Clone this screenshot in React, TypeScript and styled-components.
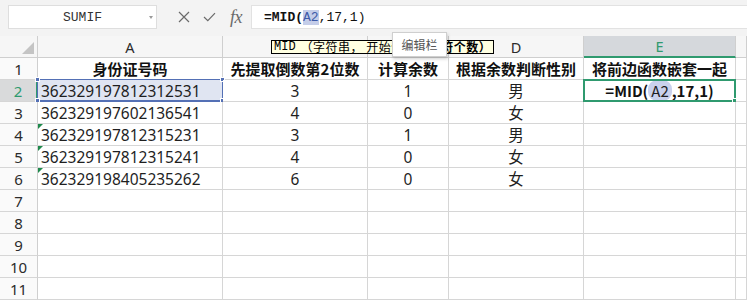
import React from "react";
import styled, { createGlobalStyle, css } from "styled-components";

const GREEN = "#2f9a6f";
const BLUE = "#5470b5";
const GRID = "#d6d6d6";

const GlobalStyle = createGlobalStyle`
  html, body { margin: 0; padding: 0; background: #ffffff; }
  body { font-family: "Noto Sans", "Noto Sans CJK SC", sans-serif; color: #1f1f1f; overflow: hidden; }
  * { box-sizing: border-box; }
`;

const Page = styled.div`
  position: relative;
  width: 747px;
  height: 304px;
  overflow: hidden;
  background: #ffffff;
`;

const Toolbar = styled.div`
  display: flex;
  align-items: flex-start;
  height: 36px;
  padding-top: 5px;
  background: #f3f3f3;
`;

const NameBox = styled.div`
  position: relative;
  margin-left: 8px;
  width: 149px;
  height: 24px;
  background: #ffffff;
  border: 1px solid #dedede;
  display: flex;
  align-items: center;
  justify-content: center;
  font-family: "Liberation Mono", "DejaVu Sans Mono", monospace;
  font-size: 13px;
  color: #333;
`;

const DropArrow = styled.span`
  position: absolute;
  right: 3px;
  top: 10px;
  width: 0;
  height: 0;
  border-left: 2.5px solid transparent;
  border-right: 2.5px solid transparent;
  border-top: 3px solid #9a9a9a;
`;

const IconGroup = styled.div`
  display: flex;
  align-items: center;
  height: 24px;
  margin-left: 21px;
  gap: 13px;
  color: #6a6a6a;
`;

const Fx = styled.span`
  font-family: "Liberation Serif", serif;
  font-style: italic;
  font-size: 18px;
  color: #6a6a6a;
  margin-left: 1px;
  letter-spacing: -0.5px;
`;

const FormulaInput = styled.div`
  flex: 1;
  margin-left: 9px;
  height: 24px;
  background: #ffffff;
  border: 1px solid #e2e2e2;
  border-right: none;
  display: flex;
  align-items: center;
  padding-left: 12px;
  font-family: "Liberation Mono", "DejaVu Sans Mono", monospace;
  font-size: 13px;
  color: #111;
`;

const Strong = styled.span`
  font-weight: 700;
`;

const RefMark = styled.span<{ $pill?: boolean }>`
  background: ${(p) => (p.$pill ? "#c9d1ec" : "#c4cde9")};
  color: ${(p) => (p.$pill ? "#1f1f1f" : "#3d5aa8")};
  font-weight: 400;
  border-radius: ${(p) => (p.$pill ? "9px" : "0")};
  padding: ${(p) => (p.$pill ? "0 3px" : "0")};
`;

const Sheet = styled.div`
  display: grid;
  grid-template-columns: 38px 185px 145px 81px 135px 152px 1fr;
  grid-auto-rows: 22px;
`;

type CellProps = {
  $kind?: "corner" | "colhead" | "rowhead" | "data";
  $active?: boolean;
  $align?: "left" | "center";
  $bold?: boolean;
};

const Cell = styled.div<CellProps>`
  position: relative;
  display: flex;
  align-items: center;
  justify-content: ${(p) => (p.$align === "left" ? "flex-start" : "center")};
  padding-left: ${(p) => (p.$align === "left" ? "3px" : "0")};
  border-right: 1px solid ${GRID};
  border-bottom: 1px solid ${GRID};
  font-size: 15.5px;
  font-weight: ${(p) => (p.$bold ? 700 : 400)};
  white-space: nowrap;
  background: #ffffff;
  ${(p) =>
    p.$bold &&
    css`
      font-family: "Noto Sans CJK SC", "Noto Sans", sans-serif;
      font-size: 15px;
      color: #111;
    `}
  ${(p) =>
    p.$kind === "corner" &&
    css`
      background: #f6f6f6;
      border-right-color: #cfcfcf;
      border-bottom-color: #cfcfcf;
    `}
  ${(p) =>
    p.$kind === "colhead" &&
    css`
      background: #f6f6f6;
      font-size: 14.5px;
      color: #2b2b2b;
      border-right-color: #cfcfcf;
      border-bottom-color: #cfcfcf;
    `}
  ${(p) =>
    p.$kind === "colhead" &&
    p.$active &&
    css`
      background: #d5d8dc;
      color: ${GREEN};
      border-bottom: 2px solid ${GREEN};
    `}
  ${(p) =>
    p.$kind === "rowhead" &&
    css`
      background: #fafafa;
      font-size: 15px;
      color: #2b2b2b;
      border-right-color: #cfcfcf;
    `}
  ${(p) =>
    p.$kind === "rowhead" &&
    p.$active &&
    css`
      background: #d9dadb;
      color: ${GREEN};
      border-right: 2px solid ${GREEN};
    `}
`;

const CornerTriangle = styled.span`
  position: absolute;
  right: 3px;
  bottom: 3px;
  width: 0;
  height: 0;
  border-left: 12px solid transparent;
  border-bottom: 12px solid #c4c4c4;
`;

const ErrorFlag = styled.span`
  position: absolute;
  left: 0;
  top: 0;
  width: 0;
  height: 0;
  border-right: 5px solid transparent;
  border-top: 5px solid #1f8a4c;
`;

const RefRange = styled.span`
  position: absolute;
  inset: -1px -1px -1px -1px;
  background: rgba(84, 112, 181, 0.18);
  border: 1px solid ${BLUE};
  border-bottom-width: 2px;
  pointer-events: none;
`;

const Handle = styled.span<{ $x: "l" | "r"; $y: "t" | "b"; $color: string }>`
  position: absolute;
  width: 5px;
  height: 5px;
  background: ${(p) => p.$color};
  border: 1px solid #ffffff;
  ${(p) => (p.$x === "l" ? "left: -3px;" : "right: -3px;")}
  ${(p) => (p.$y === "t" ? "top: -3px;" : "bottom: -3px;")}
`;

const ActiveFrame = styled.span`
  position: absolute;
  inset: -1px -1px -1px -1px;
  border: 2px solid ${GREEN};
  pointer-events: none;
`;

const CellText = styled.span`
  position: relative;
`;

const ArgTip = styled.div`
  position: absolute;
  left: 271px;
  top: 40px;
  height: 14px;
  padding: 0 2px 0 2px;
  background: #ffffe1;
  border: 1px solid #000;
  display: flex;
  align-items: center;
  font-family: "Noto Sans CJK SC", sans-serif;
  font-size: 12px;
  line-height: 12px;
  letter-spacing: 0.5px;
  color: #000;
  white-space: nowrap;
`;

const TipMono = styled.span`
  font-family: "Liberation Mono", monospace;
  font-size: 12px;
  letter-spacing: 0;
  margin-right: 5px;
`;

const TipBold = styled.span`
  font-weight: 700;
`;

const BarTip = styled.div`
  position: absolute;
  left: 392px;
  top: 32px;
  width: 55px;
  height: 25px;
  background: #ffffff;
  border: 1px solid #cfcfcf;
  box-shadow: 1px 2px 3px rgba(0, 0, 0, 0.18);
  display: flex;
  align-items: center;
  justify-content: center;
  font-family: "Noto Sans CJK SC", sans-serif;
  font-size: 12px;
  color: #555;
`;

const cols = ["A", "B", "C", "D", "E", ""];

const headers = ["身份证号码", "先提取倒数第2位数", "计算余数", "根据余数判断性别", "将前边函数嵌套一起"];

const data: [string, string, string, string][] = [
  ["362329197812312531", "3", "1", "男"],
  ["362329197602136541", "4", "0", "女"],
  ["362329197812315231", "3", "1", "男"],
  ["362329197812315241", "4", "0", "女"],
  ["362329198405235262", "6", "0", "女"],
];

const flagged = new Set([4, 5, 6]);

const XIcon = () => (
  <svg width="12" height="12" viewBox="0 0 12 12">
    <path d="M1 1 L11 11 M11 1 L1 11" stroke="#6a6a6a" strokeWidth="1.2" fill="none" />
  </svg>
);

const CheckIcon = () => (
  <svg width="13" height="10" viewBox="0 0 13 10">
    <path d="M1 5 L4.8 8.6 L12 1.2" stroke="#6a6a6a" strokeWidth="1.2" fill="none" />
  </svg>
);

export default function App() {
  const rows = [];
  for (let r = 1; r <= 11; r++) {
    const active = r === 2;
    rows.push(
      <Cell key={`h${r}`} $kind="rowhead" $active={active}>
        {r}
      </Cell>
    );
    if (r === 1) {
      headers.forEach((h, i) =>
        rows.push(
          <Cell key={`r1c${i}`} $bold>
            {h}
          </Cell>
        )
      );
      rows.push(<Cell key="r1f" />);
      continue;
    }
    const d = data[r - 2];
    if (d) {
      rows.push(
        <Cell key={`r${r}a`} $align="left">
          {flagged.has(r) && <ErrorFlag />}
          {r === 2 && (
            <RefRange>
              <Handle $x="l" $y="t" $color={BLUE} />
              <Handle $x="r" $y="t" $color={BLUE} />
              <Handle $x="l" $y="b" $color={BLUE} />
              <Handle $x="r" $y="b" $color={BLUE} />
            </RefRange>
          )}
          <CellText>{d[0]}</CellText>
        </Cell>
      );
      rows.push(<Cell key={`r${r}b`}>{d[1]}</Cell>);
      rows.push(<Cell key={`r${r}c`}>{d[2]}</Cell>);
      rows.push(<Cell key={`r${r}d`}>{d[3]}</Cell>);
      rows.push(
        <Cell key={`r${r}e`} $bold={r === 2}>
          {r === 2 && (
            <>
              <CellText>
                =MID(<RefMark $pill>A2</RefMark>,17,1)
              </CellText>
              <ActiveFrame>
                <Handle $x="r" $y="b" $color={GREEN} />
              </ActiveFrame>
            </>
          )}
        </Cell>
      );
      rows.push(<Cell key={`r${r}f`} />);
    } else {
      for (let c = 0; c < 6; c++) rows.push(<Cell key={`r${r}x${c}`} />);
    }
  }

  return (
    <Page>
      <GlobalStyle />
      <Toolbar>
        <NameBox>
          SUMIF
          <DropArrow />
        </NameBox>
        <IconGroup>
          <XIcon />
          <CheckIcon />
          <Fx>fx</Fx>
        </IconGroup>
        <FormulaInput>
          <Strong>=MID(</Strong>
          <RefMark>A2</RefMark>,17,1)
        </FormulaInput>
      </Toolbar>
      <Sheet>
        <Cell $kind="corner">
          <CornerTriangle />
        </Cell>
        {cols.map((c) => (
          <Cell key={`col${c}`} $kind="colhead" $active={c === "E"}>
            {c}
          </Cell>
        ))}
        {rows}
      </Sheet>
      <ArgTip>
        <TipMono>MID</TipMono>（字符串， 开始位置， <TipBold>字符个数）</TipBold>
      </ArgTip>
      <BarTip>编辑栏</BarTip>
    </Page>
  );
}
